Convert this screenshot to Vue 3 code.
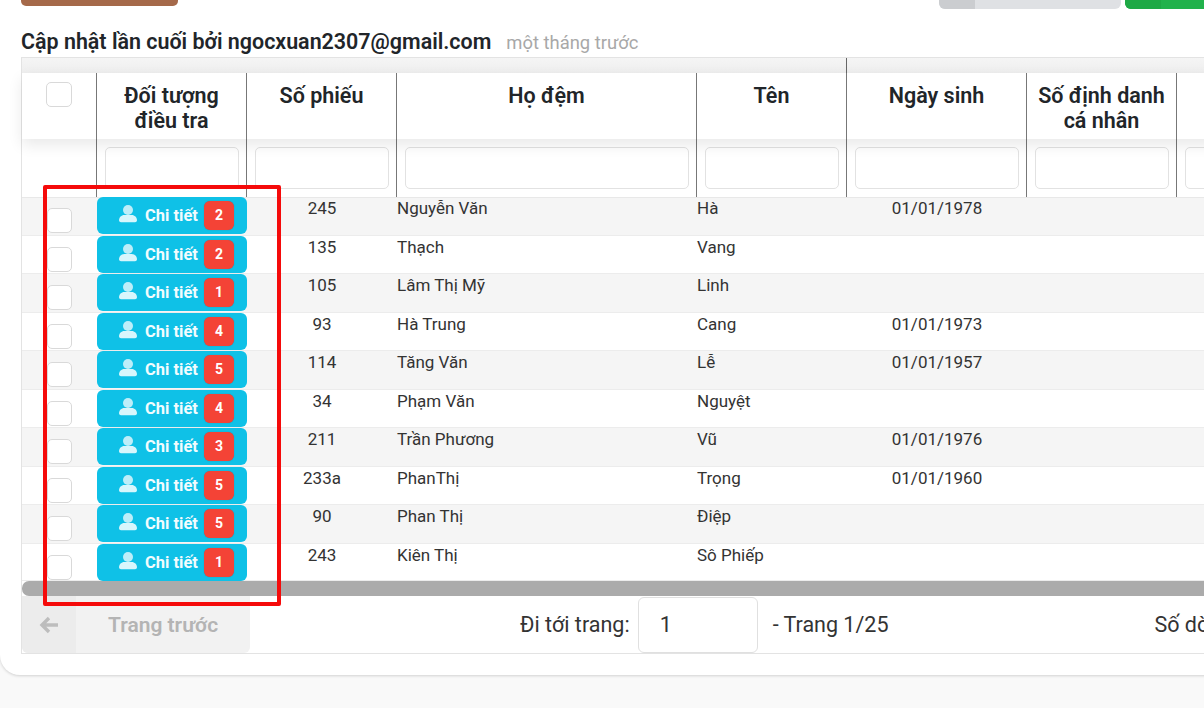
<script setup>
const rows = [
  { n: 2, so: '245', ho: 'Nguyễn Văn', ten: 'Hà', dob: '01/01/1978' },
  { n: 2, so: '135', ho: 'Thạch', ten: 'Vang', dob: '' },
  { n: 1, so: '105', ho: 'Lâm Thị Mỹ', ten: 'Linh', dob: '' },
  { n: 4, so: '93', ho: 'Hà Trung', ten: 'Cang', dob: '01/01/1973' },
  { n: 5, so: '114', ho: 'Tăng Văn', ten: 'Lễ', dob: '01/01/1957' },
  { n: 4, so: '34', ho: 'Phạm Văn', ten: 'Nguyệt', dob: '' },
  { n: 3, so: '211', ho: 'Trần Phương', ten: 'Vũ', dob: '01/01/1976' },
  { n: 5, so: '233a', ho: 'PhanThị', ten: 'Trọng', dob: '01/01/1960' },
  { n: 5, so: '90', ho: 'Phan Thị', ten: 'Điệp', dob: '' },
  { n: 1, so: '243', ho: 'Kiên Thị', ten: 'Sô Phiếp', dob: '' },
]
const heads = ['Đối tượng điều tra', 'Số phiếu', 'Họ đệm', 'Tên', 'Ngày sinh', 'Số định danh cá nhân', '']
</script>

<template>
  <div class="page">
    <div class="card">
      <div class="toolbar">
        <div class="btn-brown"></div>
        <div class="toolbar-right">
          <div class="btn-grey"><span></span></div>
          <div class="btn-green"><span></span></div>
        </div>
      </div>
      <div class="updated">
        <strong>Cập nhật lần cuối bởi ngocxuan2307@gmail.com</strong>
        <span>một tháng trước</span>
      </div>
      <div class="table">
        <div class="group-row">
          <div class="group-a"></div>
          <div class="group-b"></div>
        </div>
        <div class="head-row cols head-cols">
          <div class="hcell first"><span class="check"></span></div>
          <div v-for="h in heads" :key="h" class="hcell">{{ h }}</div>
        </div>
        <div class="filter-row cols head-cols">
          <div class="fcell first"></div>
          <div v-for="h in heads" :key="h" class="fcell"><div class="finput"></div></div>
        </div>
        <div class="body">
          <div v-for="r in rows" :key="r.so" class="row cols">
            <div class="cell-check"><span class="check"></span></div>
            <div class="cell-btn">
              <div class="detail">
                <svg class="user" viewBox="0 0 18 18" width="18" height="18">
                  <circle cx="9" cy="5" r="5" fill="#bdeef9" />
                  <path d="M0 15.2C0 12.3 2.4 10 5.3 10h7.4c2.9 0 5.3 2.3 5.3 5.2 0 1.2-1 2-2 2H2c-1 0-2-.8-2-2z" fill="#d8f6fc" />
                </svg>
                <span class="detail-text">Chi tiết</span>
                <span class="badge">{{ r.n }}</span>
              </div>
            </div>
            <div class="cell center">{{ r.so }}</div>
            <div class="cell">{{ r.ho }}</div>
            <div class="cell">{{ r.ten }}</div>
            <div class="cell center">{{ r.dob }}</div>
            <div class="cell"></div>
            <div class="cell"></div>
          </div>
        </div>
        <div class="scrollbar"></div>
        <div class="pager">
          <div class="prev">
            <span class="prev-icon">
              <svg viewBox="0 0 20 18" width="20" height="18">
                <path d="M10 2 3 9l7 7M3.5 9H19" fill="none" stroke="#bdbdbd" stroke-width="3.4" />
              </svg>
            </span>
            <span class="prev-text">Trang trước</span>
          </div>
          <span class="goto">Đi tới trang:</span>
          <div class="page-input">1</div>
          <span class="page-info">- Trang 1/25</span>
          <span class="rows-label">Số dòng</span>
        </div>
      </div>
    </div>
    <div class="highlight"></div>
  </div>
</template>

<style scoped>
.page {
  position: relative;
  width: 1204px;
  height: 708px;
  overflow: hidden;
  background: #f9f9f9;
  font-family: Roboto, "Noto Sans", sans-serif;
  color: #212529;
}
.card {
  width: 1500px;
  height: 675px;
  box-sizing: border-box;
  background: #fff;
  border-radius: 0 0 20px 20px;
  box-shadow: 0 1px 3px rgba(0, 0, 0, 0.16);
  padding-left: 21px;
}
.toolbar {
  display: flex;
  justify-content: space-between;
  height: 6px;
  width: 1183px;
}
.btn-brown {
  width: 157px;
  height: 6px;
  background: #a5694a;
  border-radius: 0 0 5px 5px;
}
.toolbar-right {
  display: flex;
  gap: 4px;
  width: 265px;
  flex: none;
}
.btn-grey {
  width: 182px;
  height: 9px;
  flex: none;
  background: #dfe1e4;
  border-radius: 0 0 6px 6px;
  overflow: hidden;
}
.btn-grey span {
  display: block;
  width: 36px;
  height: 100%;
  background: #cbcdd0;
}
.btn-green {
  width: 100px;
  height: 9px;
  flex: none;
  background: #21b24b;
  border-radius: 0 0 0 6px;
  overflow: hidden;
}
.btn-green span {
  display: block;
  width: 36px;
  height: 100%;
  background: #1ea945;
}
.updated {
  display: flex;
  align-items: baseline;
  gap: 15px;
  height: 51px;
  box-sizing: border-box;
  padding-top: 25px;
  line-height: 22px;
}
.updated strong {
  font-size: 21.45px;
  font-weight: 600;
  color: #212529;
}
.updated span {
  font-size: 18.4px;
  color: #a8a8a8;
}
.table {
  width: 1479px;
  border-left: 1px solid #e3e3e3;
}
.cols {
  display: grid;
  grid-template-columns: 75px 150px 150px 300px 150px 180px 150px 150px;
}
.head-cols {
  grid-template-columns: 74px 150px 150px 300px 150px 180px 150px 150px;
}
.group-row {
  display: flex;
  height: 16px;
  box-sizing: border-box;
  border-top: 1px solid #e3e3e3;
  background: linear-gradient(#f5f5f5, #eeeeee);
}
.group-a {
  width: 824px;
  flex: none;
}
.group-b {
  flex: 1;
  border-left: 1px solid #666;
}
.head-row {
  position: relative;
  height: 66px;
  background: #fff;
  box-shadow: 0 6px 14px rgba(0, 0, 0, 0.09);
}
.hcell {
  border-left: 1px solid #777;
  box-sizing: border-box;
  padding: 9.5px 8px 0;
  text-align: center;
  font-size: 21.5px;
  font-weight: 600;
  line-height: 25px;
  color: #212529;
}
.hcell.first {
  border-left: 0;
  text-align: left;
  padding: 9px 0 0 24px;
}
.check {
  display: block;
  width: 26px;
  height: 25px;
  box-sizing: border-box;
  background: #fff;
  border: 1px solid #d9d9d9;
  border-radius: 5px;
}
.filter-row {
  height: 58px;
}
.fcell {
  border-left: 1px solid #777;
  box-sizing: border-box;
  padding: 8px 7px 0 8px;
}
.fcell.first {
  border-left: 0;
}
.finput {
  height: 42px;
  box-sizing: border-box;
  background: #fff;
  border: 1px solid #e2e2e2;
  border-radius: 5px;
}
.row {
  height: 38.5px;
  box-sizing: border-box;
  box-shadow: inset 0 -1px #ececec;
  background: #fff;
}
.row:first-child {
  box-shadow: inset 0 1px #e8e8e8, inset 0 -1px #ececec;
}
.row:nth-child(odd) {
  background: #f5f5f5;
}
.row:last-child {
  height: 37.5px;
}
.cell-check {
  padding: 11px 0 0 25px;
}
.cell-check .check {
  width: 25px;
}
.detail {
  display: flex;
  align-items: center;
  height: 37px;
  box-sizing: border-box;
  padding: 0 0 0 22px;
  background: #0fc1e7;
  border-radius: 6px;
  color: #fff;
}
.user {
  flex: none;
  margin-top: -3px;
}
.detail-text {
  margin-left: 8px;
  font-size: 16.5px;
  font-weight: 700;
  line-height: 37px;
  color: #f2fcfe;
}
.badge {
  width: 30px;
  height: 29px;
  margin-left: 6px;
  background: #f44336;
  border-radius: 6px;
  font-size: 14px;
  font-weight: 700;
  line-height: 29px;
  text-align: center;
  color: #fff;
  box-shadow: 0 0 1px rgba(120, 60, 60, 0.6);
}
.cell {
  font-size: 17px;
  line-height: 22px;
  color: #333;
}
.cell.center {
  text-align: center;
}
.scrollbar {
  height: 15px;
  background: #ababab;
  border-radius: 7px 0 0 7px;
}
.pager {
  display: flex;
  align-items: flex-start;
  height: 58px;
  box-sizing: border-box;
  border-bottom: 1px solid #e3e3e3;
  font-size: 21.5px;
  line-height: 58px;
  color: #333;
  white-space: nowrap;
}
.prev {
  display: flex;
  align-items: stretch;
  width: 228px;
  height: 57px;
  flex: none;
  background: #f2f2f2;
  border-radius: 0 0 6px 6px;
  overflow: hidden;
}
.prev-icon {
  display: flex;
  align-items: center;
  justify-content: center;
  width: 54px;
  flex: none;
  background: #ececec;
}
.prev-text {
  padding-left: 32px;
  font-size: 21px;
  font-weight: 600;
  color: #b4b4b4;
}
.goto {
  margin-left: 270px;
}
.page-input {
  width: 120px;
  height: 56px;
  flex: none;
  box-sizing: border-box;
  margin: 1px 0 0 8px;
  padding-left: 21px;
  background: #fff;
  border: 1px solid #e0e0e0;
  border-radius: 6px;
  line-height: 54px;
}
.page-info {
  margin-left: 15px;
}
.rows-label {
  margin-left: 266px;
}
.highlight {
  position: absolute;
  left: 43px;
  top: 185px;
  width: 238px;
  height: 421px;
  box-sizing: border-box;
  border: 4px solid #f50a0a;
  border-radius: 2px;
  pointer-events: none;
}
</style>
